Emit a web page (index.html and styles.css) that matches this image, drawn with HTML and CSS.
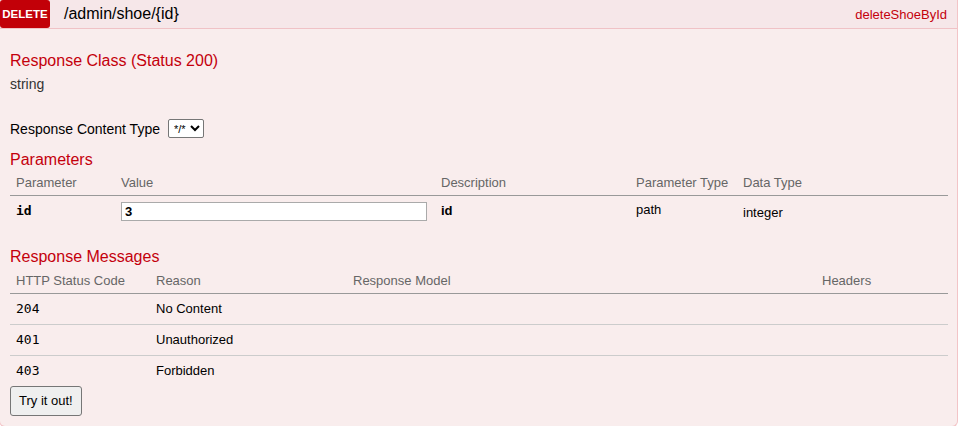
FILE: index.html
```html
<!DOCTYPE html>
<html>
<head>
<meta charset="utf-8">
<link rel="stylesheet" href="styles.css">
</head>
<body>
<div class="operation">
  <div class="heading">
    <div class="heading-left">
      <span class="method">DELETE</span>
      <span class="path">/admin/shoe/{id}</span>
    </div>
    <span class="nickname">deleteShoeById</span>
  </div>
  <div class="content">
    <h4 class="section-title first">Response Class (Status 200)</h4>
    <div class="model">string</div>

    <div class="content-type">
      <label>Response Content Type</label>
      <select class="ct-select"><option>*/*</option></select>
    </div>

    <h4 class="section-title params-title">Parameters</h4>
    <table class="params">
      <colgroup>
        <col class="c-param"><col class="c-value"><col class="c-desc"><col class="c-ptype"><col class="c-dtype">
      </colgroup>
      <thead>
        <tr><th>Parameter</th><th>Value</th><th>Description</th><th>Parameter Type</th><th>Data Type</th></tr>
      </thead>
      <tbody>
        <tr>
          <td class="code bold">id</td>
          <td class="value"><input class="value-input" type="text" value="3"></td>
          <td class="strong">id</td>
          <td class="ptype">path</td>
          <td class="dtype">integer</td>
        </tr>
      </tbody>
    </table>

    <h4 class="section-title msgs">Response Messages</h4>
    <table class="messages">
      <colgroup>
        <col class="c-code"><col class="c-reason"><col class="c-model"><col class="c-headers">
      </colgroup>
      <thead>
        <tr><th>HTTP Status Code</th><th>Reason</th><th>Response Model</th><th>Headers</th></tr>
      </thead>
      <tbody>
        <tr><td class="code">204</td><td>No Content</td><td></td><td></td></tr>
        <tr><td class="code">401</td><td>Unauthorized</td><td></td><td></td></tr>
        <tr><td class="code">403</td><td>Forbidden</td><td></td><td></td></tr>
      </tbody>
    </table>

    <button class="try-btn" type="button">Try it out!</button>
  </div>
</div>
</body>
</html>
```

FILE: styles.css
```css
html, body {
  margin: 0;
  padding: 0;
  background: #ffffff;
}

body {
  font-family: "Liberation Sans", Arial, Helvetica, sans-serif;
  font-size: 13px;
  color: #333333;
}

.operation {
  margin-left: -1px;
  width: 957px;
  border: 1px solid #f3c4c7;
  border-top: none;
  border-radius: 0 0 6px 6px;
  background: #f9eded;
  overflow: hidden;
}

.heading {
  display: flex;
  justify-content: space-between;
  align-items: center;
  height: 28px;
  background: #f6e7e9;
  border-bottom: 1px solid #f0c2c6;
}

.heading-left {
  display: flex;
  align-items: center;
  height: 100%;
}

.method {
  display: flex;
  align-items: center;
  justify-content: center;
  width: 50px;
  height: 28px;
  background: #c20008;
  color: #ffffff;
  font-size: 11.5px;
  font-weight: bold;
  border-radius: 3px;
}

.path {
  margin-left: 14px;
  font-size: 16px;
  color: #000000;
}

.nickname {
  margin-right: 10px;
  font-size: 13px;
  color: #c4000c;
}

.content {
  padding: 0 9px 10px 10px;
}

.section-title {
  margin: 0;
  font-size: 16px;
  line-height: 18px;
  font-weight: normal;
  color: #c4000c;
}

.section-title.first {
  padding-top: 23px;
}

.model {
  margin-top: 6px;
  font-size: 14px;
  line-height: 16px;
  color: #333333;
}

.content-type {
  display: flex;
  align-items: center;
  height: 19px;
  margin-top: 27px;
  color: #000000;
  font-size: 14px;
}

.ct-select {
  margin-left: 8px;
  height: 19px;
  font-family: "Liberation Sans", Arial, sans-serif;
  font-size: 11px;
  padding: 0 1px;
  border: 1px solid #767676;
  border-radius: 2px;
  background: #ffffff;
  color: #000000;
}

.section-title.params-title {
  margin-top: 13px;
}

table {
  border-collapse: collapse;
  width: 938px;
  table-layout: fixed;
}

th {
  text-align: left;
  font-weight: normal;
  color: #666666;
  font-size: 13px;
  line-height: 15px;
  padding: 7px 6px 5px 6px;
  border-bottom: 1px solid #999999;
}

.params th {
  padding-top: 6px;
}

td {
  padding: 7px 6px 8px 6px;
  font-size: 13px;
  line-height: 15px;
  color: #000000;
  vertical-align: top;
}

td.code {
  font-family: "DejaVu Sans Mono", "Liberation Mono", monospace;
  font-size: 13px;
}

td.bold,
td.strong {
  font-weight: bold;
}

.params td {
  height: 31px;
  box-sizing: border-box;
  padding-top: 7px;
  padding-bottom: 0;
}

.params td.value {
  padding-top: 6px;
}

.params td.ptype {
  padding-top: 6px;
}

.params td.dtype {
  padding-top: 9px;
}

.c-param { width: 105px; }
.c-value { width: 320px; }
.c-desc { width: 195px; }
.c-ptype { width: 107px; }
.c-dtype { width: 211px; }

.value-input {
  display: block;
  box-sizing: border-box;
  width: 306px;
  height: 19px;
  margin: 0;
  padding: 1px 3px;
  border: 1px solid #aaaaaa;
  background: #ffffff;
  font-family: "Liberation Sans", Arial, sans-serif;
  font-weight: bold;
  font-size: 13px;
  color: #000000;
}

.section-title.msgs {
  margin-top: 21px;
}

.c-code { width: 140px; }
.c-reason { width: 197px; }
.c-model { width: 469px; }
.c-headers { width: 132px; }

.messages td {
  border-bottom: 1px solid #cccccc;
}

.messages tbody tr:last-child td {
  border-bottom: none;
}

.try-btn {
  display: block;
  margin-top: 0;
  height: 30px;
  padding: 0 8px;
  font-family: "Liberation Sans", Arial, sans-serif;
  font-size: 13px;
  color: #000000;
  background: #efefef;
  border: 1px solid #767676;
  border-radius: 3px;
}
```
